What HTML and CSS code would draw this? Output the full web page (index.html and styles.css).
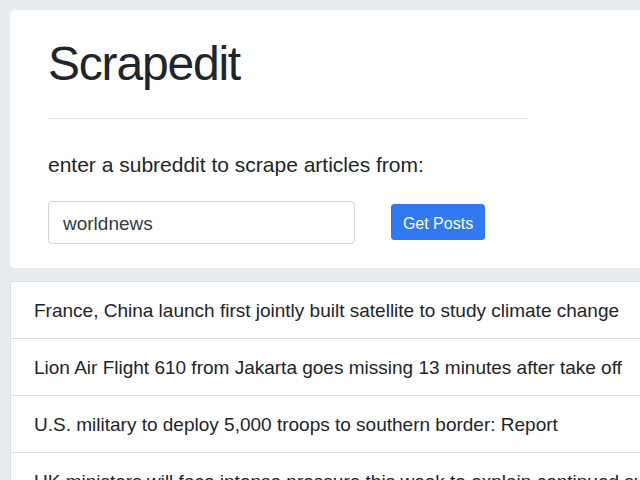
FILE: index.html
```html
<!DOCTYPE html>
<html lang="en">
<head>
<meta charset="utf-8">
<title>Scrapedit</title>
<link rel="stylesheet" href="styles.css">
</head>
<body>
<div class="page">
  <section class="jumbotron">
    <h1 class="title">Scrapedit</h1>
    <hr class="rule">
    <p class="lead">enter a subreddit to scrape articles from:</p>
    <form class="search">
      <input class="field" type="text" value="worldnews">
      <button class="btn" type="button">Get Posts</button>
    </form>
  </section>
  <ul class="posts">
    <li class="post">France, China launch first jointly built satellite to study climate change</li>
    <li class="post">Lion Air Flight 610 from Jakarta goes missing 13 minutes after take off</li>
    <li class="post">U.S. military to deploy 5,000 troops to southern border: Report</li>
    <li class="post">UK ministers will face intense pressure this week to explain continued support for Saudi Arabia</li>
  </ul>
</div>
</body>
</html>
```

FILE: styles.css
```css
html, body {
  margin: 0;
  padding: 0;
  overflow: hidden;
}
body {
  background: #e9ecef;
  font-family: "Liberation Sans", Arial, sans-serif;
  color: #212529;
}
.page {
  padding: 10px 0 0 10px;
  width: 720px;
}
.jumbotron {
  background: #fff;
  border-radius: 5px;
  padding: 25px 38px 24px 38px;
}
.title {
  margin: 0;
  font-size: 48px;
  line-height: 1.2;
  font-weight: 400;
  letter-spacing: -1.2px;
}
.rule {
  width: 480px;
  margin: 25px 0 31px 0;
  border: 0;
  border-top: 1px solid #e3e5e8;
  height: 0;
}
.lead {
  margin: 0 0 21px 0;
  font-size: 21px;
  line-height: 30px;
  font-weight: 300;
  color: #212529;
}
.search {
  display: flex;
  align-items: center;
  gap: 36px;
}
.field {
  box-sizing: border-box;
  width: 307px;
  height: 43px;
  padding: 3px 14px 0 14px;
  border: 1px solid #ced4da;
  border-radius: 4px;
  font-family: inherit;
  font-size: 19px;
  color: #343a40;
  background: #fff;
}
.btn {
  box-sizing: border-box;
  width: 94px;
  height: 36px;
  border: 1px solid #2f77ef;
  border-radius: 3px;
  background: #3179f1;
  color: #fff;
  font-family: inherit;
  font-size: 16px;
  padding: 3px 0 0 0;
}
.posts {
  list-style: none;
  margin: 13px 0 0 0;
  padding: 0;
  background: #fff;
  border-radius: 4px 0 0 0;
}
.post {
  border: 1px solid #dcdee0;
  border-bottom: 0;
  padding: 14px 23px 12px 23px;
  font-size: 19px;
  line-height: 30px;
  white-space: nowrap;
}
.post:first-child {
  border-radius: 4px 0 0 0;
}
```
